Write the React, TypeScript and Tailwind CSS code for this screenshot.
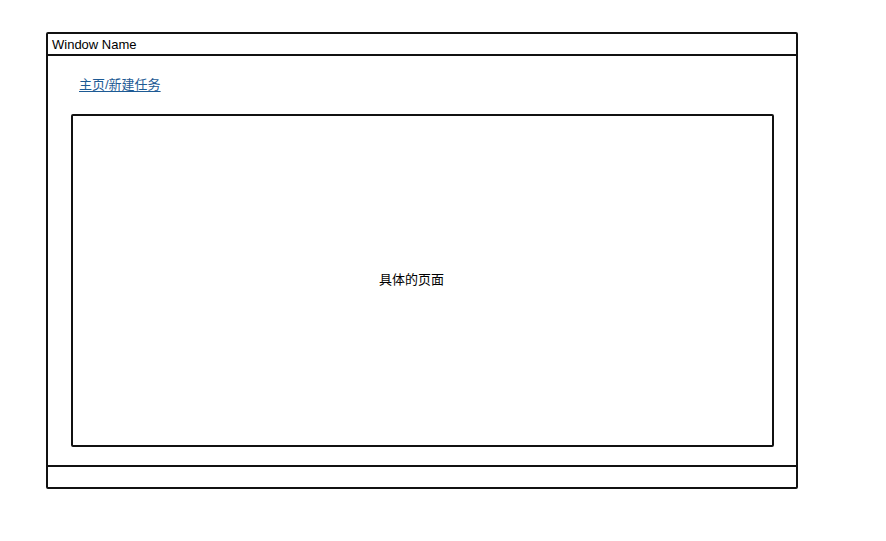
export default function App() {
  return (
    <div className="h-[541px] w-[886px] bg-white pl-[46px] pt-[32px] font-['Liberation_Sans','Noto_Sans_CJK_SC',sans-serif] text-[13px] text-black">
      <div className="flex h-[457px] w-[752px] flex-col rounded-[2px] border-2 border-[#111]">
        <div className="flex h-[22px] shrink-0 items-center border-b-2 border-[#111] pl-[4px] leading-none">
          Window Name
        </div>
        <div className="flex flex-1 flex-col pb-[18px] pl-[23px] pr-[22px]">
          <div className="flex h-[58px] items-start pl-[8px] pt-[21px]">
            <a href="#" className="leading-[16px] text-[#1d5a94] underline underline-offset-2">
              主页/新建任务
            </a>
          </div>
          <div className="flex flex-1 items-center justify-center rounded-[2px] border-2 border-[#111] pb-[1px] pr-[22px]">
            具体的页面
          </div>
        </div>
        <div className="h-[22px] shrink-0 border-t-2 border-[#111]" />
      </div>
    </div>
  );
}
